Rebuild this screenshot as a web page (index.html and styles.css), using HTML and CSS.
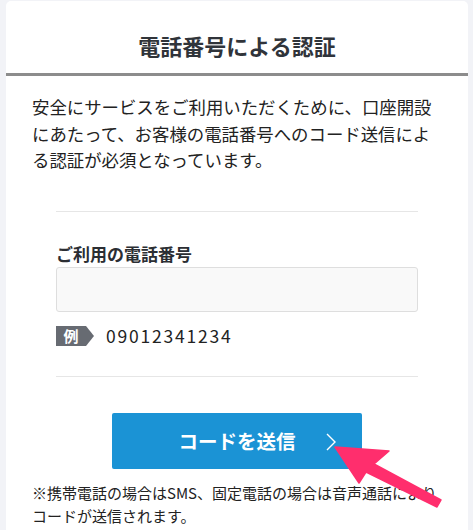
FILE: index.html
```html
<!DOCTYPE html>
<html lang="ja">
<head>
  <meta charset="UTF-8">
  <title>電話番号による認証</title>
  <link rel="stylesheet" href="styles.css">
</head>
<body>

  <div class="card">
    <header class="card-head">
      <h1>電話番号による認証</h1>
    </header>

    <div class="card-body">
      <p class="lead">安全にサービスをご利用いただくために、口座開設にあたって、お客様の電話番号へのコード送信による認証が必須となっています。</p>

      <div class="field">
        <label for="tel">ご利用の電話番号</label>
        <input type="tel" id="tel">
        <div class="example">
          <span class="ex-badge">例</span>
          <span class="ex-num">09012341234</span>
        </div>
      </div>

      <div class="actions">
        <button class="btn-send">コードを送信
          <svg class="chev" width="10" height="18" viewBox="0 0 10 18"><path d="M1 1 L9 9 L1 17" fill="none" stroke="#fff" stroke-width="1.4"/></svg>
        </button>
      </div>

      <p class="note">※携帯電話の場合はSMS、固定電話の場合は音声通話によりコードが送信されます。</p>
    </div>
  </div>

  <!-- annotation arrow -->
  <svg class="pointer" width="473" height="530" viewBox="0 0 473 530">
    <polygon points="335,447 389,451 374,464 441,500 437,507 366,472 359,483" fill="#ff2e6d" stroke="#ff2e6d" stroke-width="1.5" stroke-linejoin="round"/>
  </svg>

</body>
</html>
```

FILE: styles.css
```css
html, body { overflow: hidden; }
body {
  margin: 0;
  height: 530px;
  background: #f2f3f7;
  font-family: "Noto Sans CJK JP", "Noto Sans", sans-serif;
  color: #222;
}

.card {
  margin: 1px 5px 0 6px;
  height: 529px;
  background: #fff;
  border-radius: 5px 5px 0 0;
}

.card-head {
  height: 72px;
  display: flex;
  align-items: center;
  justify-content: center;
  border-bottom: 3px solid #8c8c8c;
}
.card-head h1 {
  margin: 16px 0 0;
  font-size: 22px;
  font-weight: bold;
  color: #30343a;
  line-height: 1;
}

.card-body {
  padding: 18px 26px 0;
}

.lead {
  margin: 0;
  font-size: 17.4px;
  line-height: 26.5px;
}

.field {
  margin: 37px 24px 0;
  padding: 30px 0 30px;
  border-top: 1px solid #e6e6e6;
  border-bottom: 1px solid #e6e6e6;
}
.field label {
  display: block;
  font-size: 17px;
  font-weight: bold;
  color: #2b2e33;
  line-height: 24px;
  margin-bottom: 1px;
}
.field input {
  display: block;
  box-sizing: border-box;
  width: 100%;
  height: 45px;
  background: #f9f9f9;
  border: 1px solid #dedede;
  border-radius: 3px;
  outline: none;
}

.example {
  display: flex;
  align-items: center;
  margin-top: 14px;
  height: 20px;
}
.ex-badge {
  position: relative;
  width: 30px;
  height: 20px;
  background: #676b72;
  color: #fff;
  font-size: 15px;
  font-weight: bold;
  line-height: 20px;
  text-align: center;
}
.ex-badge::after {
  content: "";
  position: absolute;
  right: -8px;
  top: 0;
  border-left: 8px solid #676b72;
  border-top: 10px solid transparent;
  border-bottom: 10px solid transparent;
}
.ex-num {
  margin-left: 20px;
  font-size: 17.5px;
  letter-spacing: 1.8px;
  color: #222;
}

.actions {
  display: flex;
  justify-content: center;
  margin-top: 36px;
}
.btn-send {
  position: relative;
  width: 250px;
  height: 56px;
  border: none;
  border-radius: 2px;
  background: #1b93d5;
  color: #fff;
  font-family: inherit;
  font-size: 19.5px;
  font-weight: bold;
  padding: 0;
}
.chev {
  position: absolute;
  right: 26px;
  top: 20px;
}

.note {
  margin: 12px 0 0;
  font-size: 15px;
  line-height: 23px;
}

.pointer {
  position: absolute;
  top: 0;
  left: 0;
  pointer-events: none;
}
```
